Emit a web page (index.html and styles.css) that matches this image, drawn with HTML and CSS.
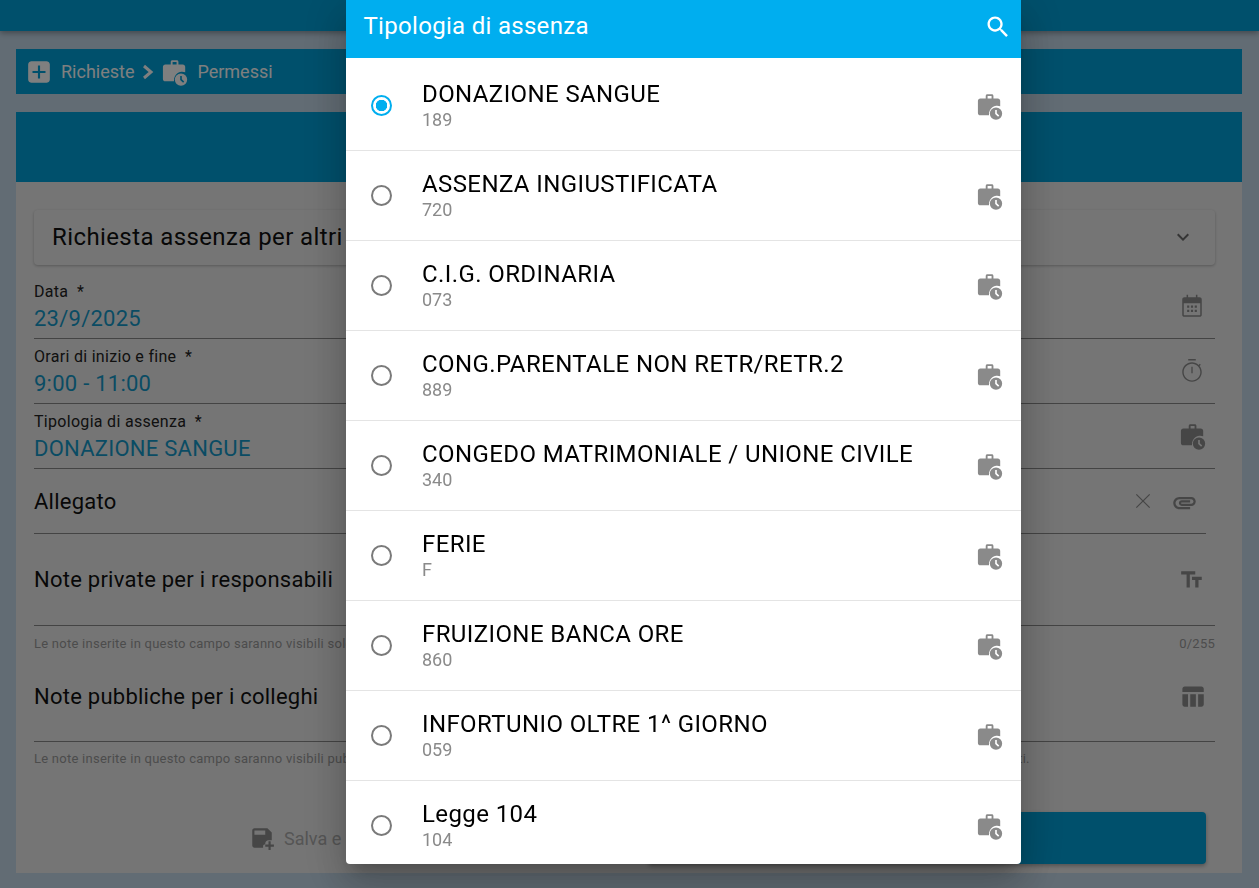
FILE: index.html
```html
<!DOCTYPE html>
<html lang="en">
<head>
    <meta charset="UTF-8">
    <title>Richieste - Permessi</title>
    <link rel="stylesheet" href="styles.css">
</head>
<body>
    <svg class="icon-defs" aria-hidden="true">
        <symbol id="i-work" viewBox="0 0 24 24">
            <path fill-rule="evenodd" d="M9.200 5.500V3.400C9.200 2.600 9.800 2 10.600 2h3.800c.8 0 1.400.6 1.400 1.400v2.100h3.700c1.200 0 2.100.9 2.100 2.100v4.700a7 7 0 0 0-9.600 6.900c0 .3 0 .6.1.8H4.600c-1.200 0-2.100-.9-2.100-2.100V7.600c0-1.200.9-2.100 2.100-2.100zM10.800 3.500v2h3.400v-2z"/>
            <path fill-rule="evenodd" d="M18 13.200a5.300 5.300 0 1 1 0 10.600 5.300 5.300 0 0 1 0-10.600zM17.300 15.500v3.400l2.500 2.300 1-1-2.100-1.900v-2.800z"/>
        </symbol>
        <symbol id="i-search" viewBox="0 0 24 24">
            <path d="M15.500 14h-.79l-.28-.27C15.410 12.590 16 11.110 16 9.500 16 5.910 13.090 3 9.500 3S3 5.910 3 9.500 5.910 16 9.500 16c1.610 0 3.090-.59 4.230-1.570l.27.28v.79l5 4.990L20.490 19l-4.990-5zm-6 0C7.010 14 5 11.990 5 9.500S7.010 5 9.500 5 14 7.010 14 9.500 11.990 14 9.500 14z"/>
        </symbol>
    </svg>

    <div class="page">
        <div class="topbar"></div>
        <div class="breadcrumb">
            <svg class="crumb-add" viewBox="0 0 24 24"><path d="M19 2H5C3.900 2 2 3 2 5v14c0 2 1.900 3 3 3h14c1.100 0 3-1 3-3V5c0-2-1.900-3-3-3zm-1 11h-5v5h-2v-5H6v-2h5V6h2v5h5v2z"/></svg>
            <span>Richieste</span>
            <svg class="crumb-arrow" viewBox="0 0 24 24"><path d="M7 6l7 6-7 6" fill="none" stroke="currentColor" stroke-width="3"/></svg>
            <svg class="crumb-work"><use href="#i-work"/></svg>
            <span>Permessi</span>
        </div>

        <div class="card-header"></div>
        <div class="card">
            <div class="accordion">
                <span>Richiesta assenza per altri</span>
                <svg class="icon" viewBox="0 0 24 24"><path d="M16.590 8.590L12 13.170 7.410 8.590 6 10l6 6 6-6z"/></svg>
            </div>

            <div class="field field-first">
                <div>
                    <label>Data &nbsp;*</label>
                    <div class="value">23/9/2025</div>
                </div>
                <svg class="icon icon-large" viewBox="0 0 24 24">
                    <path d="M7 1.500h1.400V4h7.200V1.500H17V4h2c1.200 0 2 .8 2 2v14c0 1.200-.8 2-2 2H5c-1.200 0-2-.8-2-2V6c0-1.200.8-2 2-2h2zM4.400 9.500V20c0 .4.200.6.600.6h14c.4 0 .6-.2.600-.6V9.500z"/>
                    <path d="M7.500 11.500h2v2h-2zm3.500 0h2v2h-2zm3.500 0h2v2h-2zm-7 4h2v2h-2zm3.500 0h2v2h-2zm3.500 0h2v2h-2z"/>
                </svg>
            </div>
            <div class="field">
                <div>
                    <label>Orari di inizio e fine &nbsp;*</label>
                    <div class="value">9:00 - 11:00</div>
                </div>
                <svg class="icon icon-large" viewBox="0 0 24 24"><path d="M15.500 1h-7v1.400h7V1zm-4.100 13h1.200V8h-1.200v6zm7.600-6.700l1.100-1.100-.9-.9-1.100 1.100C16.500 5 14.300 4 12 4c-5 0-9 4-9 9s4 9 9 9 9-4 9-9c0-2.100-.8-4.200-2-5.700zM12 20.700c-4.200 0-7.700-3.500-7.700-7.700S7.800 5.300 12 5.300s7.700 3.500 7.700 7.700-3.500 7.700-7.700 7.700z"/></svg>
            </div>
            <div class="field">
                <div>
                    <label>Tipologia di assenza &nbsp;*</label>
                    <div class="value">DONAZIONE SANGUE</div>
                </div>
                <svg class="icon icon-work"><use href="#i-work"/></svg>
            </div>

            <div class="attach">
                <span>Allegato</span>
                <svg class="icon-close" viewBox="0 0 24 24"><path d="M4 4l16 16M20 4L4 20" fill="none" stroke="currentColor" stroke-width="1.500"/></svg>
                <svg class="icon icon-clip" viewBox="0 0 24 24"><path d="M2 12.500C2 9.460 4.460 7 7.500 7H18c2.210 0 4 1.790 4 4s-1.790 4-4 4H9.500C8.120 15 7 13.880 7 12.500S8.120 10 9.500 10H17v2H9.410c-.55 0-.55 1 0 1H18c1.100 0 2-.9 2-2s-.9-2-2-2H7.500C5.570 9 4 10.570 4 12.500S5.570 16 7.500 16H17v2H7.500C4.460 18 2 15.540 2 12.500z"/></svg>
            </div>

            <div class="note">
                <span>Note private per i responsabili</span>
                <svg class="icon icon-large" viewBox="0 0 24 24"><path d="M2 4v3h5v12h3V7h5V4H2zm19 5h-9v3h3v7h3v-7h3V9z"/></svg>
            </div>
            <div class="hint">
                <span>Le note inserite in questo campo saranno visibili solo ai responsabili.</span>
                <span>0/255</span>
            </div>

            <div class="note note-public">
                <span>Note pubbliche per i colleghi</span>
                <svg class="icon icon-table" viewBox="0 0 24 24"><path d="M10 10.020h5V21h-5zM17 21h3c1.100 0 2-.9 2-2v-9h-5v11zm3-18H5c-1.100 0-2 .9-2 2v3h19V5c0-1.100-.9-2-2-2zM3 19c0 1.100.9 2 2 2h3V10H3v9z"/></svg>
            </div>
            <div class="hint hint-public">
                <span>Le note inserite in questo campo saranno visibili pubblicamente a tutti i colleghi della vostra struttura di riferimento, ai responsabili e anche agli altri utenti autorizzati.</span>
            </div>

            <div class="actions">
                <button class="btn-save">
                    <svg class="icon icon-large" viewBox="0 0 24 24"><path d="M17 3H5C3.900 3 3 3.900 3 5v14c0 1.100.9 2 2 2h8v-1.500c0-.9.600-1.500 1.500-1.500H15v-1c0-1.700 1.300-3 3-3h3V7l-4-4zM15 9H5V5h10v4z"/><path d="M18 15h2v3h3v2h-3v3h-2v-3h-3v-2h3z"/></svg>
                    <span>Salva e continua</span>
                </button>
                <button class="btn-send"></button>
            </div>
        </div>
    </div>

    <div class="overlay"></div>

    <div class="modal">
        <div class="modal-header">
            <h2>Tipologia di assenza</h2>
            <svg class="modal-search"><use href="#i-search"/></svg>
        </div>
        <div class="list">
            <div class="item">
                <span class="radio radio-on"></span>
                <div class="item-text"><div class="item-title">DONAZIONE SANGUE</div><div class="item-code">189</div></div>
                <svg class="item-icon"><use href="#i-work"/></svg>
            </div>
            <div class="item">
                <span class="radio"></span>
                <div class="item-text"><div class="item-title">ASSENZA INGIUSTIFICATA</div><div class="item-code">720</div></div>
                <svg class="item-icon"><use href="#i-work"/></svg>
            </div>
            <div class="item">
                <span class="radio"></span>
                <div class="item-text"><div class="item-title">C.I.G. ORDINARIA</div><div class="item-code">073</div></div>
                <svg class="item-icon"><use href="#i-work"/></svg>
            </div>
            <div class="item">
                <span class="radio"></span>
                <div class="item-text"><div class="item-title">CONG.PARENTALE NON RETR/RETR.2</div><div class="item-code">889</div></div>
                <svg class="item-icon"><use href="#i-work"/></svg>
            </div>
            <div class="item">
                <span class="radio"></span>
                <div class="item-text"><div class="item-title">CONGEDO MATRIMONIALE / UNIONE CIVILE</div><div class="item-code">340</div></div>
                <svg class="item-icon"><use href="#i-work"/></svg>
            </div>
            <div class="item">
                <span class="radio"></span>
                <div class="item-text"><div class="item-title">FERIE</div><div class="item-code">F</div></div>
                <svg class="item-icon"><use href="#i-work"/></svg>
            </div>
            <div class="item">
                <span class="radio"></span>
                <div class="item-text"><div class="item-title">FRUIZIONE BANCA ORE</div><div class="item-code">860</div></div>
                <svg class="item-icon"><use href="#i-work"/></svg>
            </div>
            <div class="item">
                <span class="radio"></span>
                <div class="item-text"><div class="item-title">INFORTUNIO OLTRE 1^ GIORNO</div><div class="item-code">059</div></div>
                <svg class="item-icon"><use href="#i-work"/></svg>
            </div>
            <div class="item">
                <span class="radio"></span>
                <div class="item-text"><div class="item-title">Legge 104</div><div class="item-code">104</div></div>
                <svg class="item-icon"><use href="#i-work"/></svg>
            </div>
        </div>
    </div>
</body>
</html>
```

FILE: styles.css
```css
:root {
    --blue: #00a0d8;
    --sky: #00aeef;
    --card: #ebebeb;
    --page: #c4d8e8;
    --grey: #8a8a8a;
    --icon: #8c8c8c;
}

* {
    margin: 0;
    padding: 0;
    box-sizing: border-box;
}

html, body {
    height: 100%;
    overflow: hidden;
}

body {
    font-family: 'Roboto', sans-serif;
    color: #000;
    background: var(--page);
}

.icon-defs {
    display: none;
}

svg {
    fill: currentColor;
    flex-shrink: 0;
}

.topbar {
    height: 31px;
    background: var(--blue);
    box-shadow: 0 2px 6px rgba(0,0,0,0.35);
}

.breadcrumb {
    height: 45px;
    margin: 18px 17px 18px 16px;
    padding-left: 10px;
    display: flex;
    align-items: center;
    background: var(--blue);
    color: #fff;
    font-size: 18px;
}

.crumb-add {
    width: 26px;
    height: 26px;
    margin-right: 9px;
}

.crumb-arrow {
    width: 24px;
    height: 24px;
    margin-left: 3px;
}

.crumb-work {
    width: 28px;
    height: 28px;
    margin: 0 9px 0 -1px;
}

.card-header {
    height: 70px;
    margin: 0 17px 0 16px;
    background: var(--blue);
}

.card {
    height: 691px;
    margin: 0 17px 0 16px;
    padding: 28px 27px 0 18px;
    background: var(--card);
    color: #111;
}

.icon {
    width: 24px;
    height: 24px;
    color: var(--icon);
}

.icon-large {
    width: 26px;
    height: 26px;
    margin-right: -1px;
}

.accordion {
    height: 55px;
    padding: 0 20px 2px 18px;
    display: flex;
    align-items: center;
    justify-content: space-between;
    border-radius: 4px;
    font-size: 24px;
    letter-spacing: 0.4px;
    background: var(--card);
    box-shadow: 0 1px 3px rgba(0,0,0,0.25);
}

.accordion .icon {
    color: #6a6a6a;
}

.field {
    height: 65px;
    padding-right: 11px;
    display: flex;
    align-items: center;
    justify-content: space-between;
    border-bottom: 1px solid #888;
}

.field-first {
    margin-top: 9px;
}

.field > div {
    padding-top: 5px;
}

.field label {
    display: block;
    font-size: 16px;
    letter-spacing: 0.3px;
    line-height: 20px;
    color: #222;
}

.field .value {
    font-size: 22px;
    letter-spacing: 0.25px;
    line-height: 33px;
    color: #1599c8;
}

.icon-work {
    width: 28px;
    height: 28px;
    margin-right: -2px;
}

.attach {
    height: 65px;
    margin-right: 9px;
    padding-right: 10px;
    display: flex;
    align-items: center;
    border-bottom: 1px solid #888;
    font-size: 22px;
    letter-spacing: 0.25px;
}

.attach span {
    flex: 1;
}

.icon-close {
    width: 20px;
    height: 20px;
    margin-right: 19px;
    color: var(--icon);
}

.icon-clip {
    width: 27px;
    height: 27px;
    margin: 2px -2px 0 -1px;
}

.note {
    height: 92px;
    padding: 33px 11px 0 0;
    display: flex;
    align-items: flex-start;
    justify-content: space-between;
    border-bottom: 1px solid #888;
    font-size: 22px;
    letter-spacing: 0.25px;
}

.note-public {
    height: 88px;
    padding-top: 30px;
}

.icon-table {
    width: 27px;
    height: 27px;
    margin: -1px -2px 0 0;
}

.hint {
    height: 28px;
    padding-top: 10px;
    display: flex;
    justify-content: space-between;
    font-size: 13px;
    letter-spacing: 0.25px;
    line-height: 15px;
    color: #999;
}

.hint-public {
    height: 70px;
    padding-top: 9px;
}

.hint-public span {
    width: 995px;
    white-space: nowrap;
    text-align: justify;
    text-align-last: justify;
}

.actions {
    display: flex;
    margin-right: 9px;
    height: 52px;
}

.btn-save {
    margin-left: 215px;
    display: flex;
    align-items: center;
    gap: 10px;
    border: none;
    background: none;
    font: inherit;
    font-size: 18px;
    color: #aaa;
}

.btn-send {
    width: 558px;
    margin-left: auto;
    border: none;
    border-radius: 4px;
    background: var(--blue);
    box-shadow: 0 2px 4px rgba(0,0,0,0.3);
}

.overlay {
    position: fixed;
    top: 0;
    left: 0;
    width: 100%;
    height: 100%;
    background: rgba(0,0,0,0.5);
}

.modal {
    position: fixed;
    top: 0;
    left: 345.5px;
    width: 675px;
    height: 864px;
    overflow: hidden;
    background: #fff;
    border-radius: 0 0 4px 4px;
    box-shadow: 0 11px 15px -7px rgba(0,0,0,0.2), 0 24px 38px 3px rgba(0,0,0,0.14), 0 9px 46px 8px rgba(0,0,0,0.12);
}

.modal-header {
    height: 58px;
    padding: 0 9px 5px 18px;
    display: flex;
    align-items: center;
    justify-content: space-between;
    background: var(--sky);
    color: #fff;
}

.modal-header h2 {
    margin-top: -2px;
    font-size: 24px;
    font-weight: 400;
    letter-spacing: 0.3px;
}

.modal-search {
    width: 28px;
    height: 28px;
}

.list {
    padding-top: 3px;
}

.item {
    height: 90px;
    padding: 0 18px 0 25px;
    display: flex;
    align-items: center;
    border-bottom: 1px solid #e4e4e4;
}

.radio {
    width: 21px;
    height: 21px;
    margin-right: 30.5px;
    border: 2px solid #7a7a7a;
    border-radius: 50%;
}

.radio-on {
    border-color: var(--sky);
    background: radial-gradient(circle, var(--sky) 5.500px, transparent 6px);
}

.item-text {
    flex: 1;
    margin-top: -4px;
}

.item-title {
    font-size: 24px;
    letter-spacing: 0.4px;
    line-height: 32px;
}

.item-code {
    font-size: 18px;
    line-height: 20px;
    color: var(--grey);
}

.item-icon {
    width: 28px;
    height: 28px;
    color: var(--grey);
}
```
